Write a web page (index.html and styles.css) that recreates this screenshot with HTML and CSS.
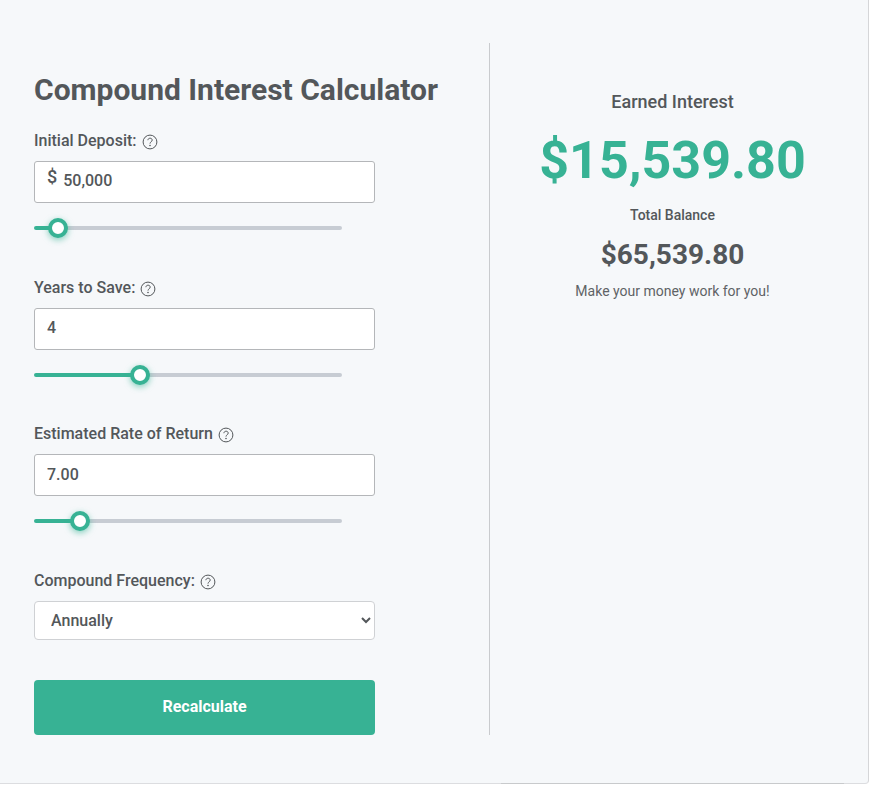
FILE: index.html
```html
<!DOCTYPE html>
<html lang="en">

<head>
    <meta charset="UTF-8">
    <meta name="viewport" content="width=device-width, initial-scale=1.0">
    <title>Compound Interest Calculator</title>
    <link rel="stylesheet" href="styles.css">
</head>

<body>
    <div class="calculator">
        <form class="calc-form">
            <h1>Compound Interest Calculator</h1>

            <div class="field">
                <label class="field-label" for="deposit">Initial Deposit:
                    <svg class="help-icon" viewBox="0 0 16 16"><circle cx="8" cy="8" r="6.9"/><path d="M5.9 6.2c.1-1.3 1-2 2.2-2 1.200 0 2.100.8 2.100 1.900 0 1.700-2.200 1.700-2.200 3.500"/><circle class="dot" cx="8" cy="11.500" r=".8"/></svg>
                </label>
                <div class="input-box">
                    <span class="prefix">$</span>
                    <input id="deposit" type="text" value="50,000">
                </div>
                <input class="slider" type="range" min="0" max="1029000" value="50000" style="--fill: 24px">
            </div>

            <div class="field">
                <label class="field-label" for="years">Years to Save:
                    <svg class="help-icon" viewBox="0 0 16 16"><circle cx="8" cy="8" r="6.9"/><path d="M5.9 6.2c.1-1.3 1-2 2.2-2 1.200 0 2.100.8 2.100 1.900 0 1.700-2.200 1.700-2.200 3.500"/><circle class="dot" cx="8" cy="11.500" r=".8"/></svg>
                </label>
                <div class="input-box">
                    <input id="years" type="text" value="4">
                </div>
                <input class="slider" type="range" min="1" max="10" value="4" style="--fill: 106px">
            </div>

            <div class="field">
                <label class="field-label" for="rate">Estimated Rate of Return
                    <svg class="help-icon" viewBox="0 0 16 16"><circle cx="8" cy="8" r="6.9"/><path d="M5.9 6.2c.1-1.3 1-2 2.2-2 1.200 0 2.100.8 2.100 1.900 0 1.700-2.200 1.700-2.200 3.500"/><circle class="dot" cx="8" cy="11.500" r=".8"/></svg>
                </label>
                <div class="input-box">
                    <input id="rate" type="text" value="7.00">
                </div>
                <input class="slider" type="range" min="0" max="56" value="7" style="--fill: 46px">
            </div>

            <div class="field field-last">
                <label class="field-label" for="frequency">Compound Frequency:
                    <svg class="help-icon" viewBox="0 0 16 16"><circle cx="8" cy="8" r="6.9"/><path d="M5.9 6.2c.1-1.3 1-2 2.2-2 1.200 0 2.100.8 2.100 1.900 0 1.700-2.200 1.700-2.200 3.500"/><circle class="dot" cx="8" cy="11.500" r=".8"/></svg>
                </label>
                <select id="frequency" class="select-box">
                    <option>Annually</option>
                    <option>Monthly</option>
                    <option>Daily</option>
                </select>
            </div>

            <button type="button" class="recalculate">Recalculate</button>
        </form>

        <div class="results">
            <h2>Earned Interest</h2>
            <p class="earned">$15,539.80</p>
            <h3>Total Balance</h3>
            <p class="balance">$65,539.80</p>
            <p class="tagline">Make your money work for you!</p>
        </div>
    </div>
</body>

</html>
```

FILE: styles.css
```css
body {
    margin: 0;
    background-color: white;
    font-family: Roboto, "Liberation Sans", sans-serif;
    color: #53575a;
}

.calculator {
    position: relative;
    box-sizing: border-box;
    width: 869px;
    height: 784px;
    padding: 43px 0 48px 34px;
    display: flex;
    background-color: #f6f8fa;
    border-right: 1px solid #d5d6d8;
    border-bottom: 1px solid #dcdde0;
    border-bottom-right-radius: 4px;
}

/* darker stretch of the bottom edge */
.calculator::after {
    content: "";
    position: absolute;
    left: 501px;
    right: 24px;
    bottom: -1px;
    height: 1px;
    background-color: #c8cacc;
}

.calc-form {
    box-sizing: border-box;
    width: 456px;
    padding-right: 114px;
    border-right: 1px solid #c9cbce;
    flex-shrink: 0;
}

.calc-form h1 {
    margin: 28px 0 0;
    font-size: 30px;
    line-height: 38px;
    font-weight: 700;
    white-space: nowrap;
}

.field {
    height: 146.67px;
}

.calc-form h1 + .field {
    margin-top: 21.4px;
}

.field-last {
    height: 109.6px;
}

.field-label {
    display: flex;
    align-items: center;
    gap: 5px;
    height: 20px;
    margin-bottom: 10.6px;
    font-size: 16px;
    font-weight: 500;
}

.help-icon {
    width: 16px;
    height: 16px;
    margin-top: 3px;
    fill: none;
    stroke: #53575a;
    stroke-width: 1;
}

.help-icon .dot {
    fill: #53575a;
    stroke: none;
}

.input-box {
    box-sizing: border-box;
    display: flex;
    align-items: center;
    width: 341px;
    height: 42px;
    padding: 0 12px 2px;
    background-color: white;
    border: 1px solid #b4b6b9;
    border-radius: 3px;
}

.prefix {
    margin: -8px 6px 0 0;
    font-size: 18px;
    font-weight: 500;
}

.input-box input {
    flex: 1;
    min-width: 0;
    padding: 0;
    border: none;
    outline: none;
    background: transparent;
    font-family: inherit;
    font-size: 16px;
    font-weight: 500;
    color: #53575a;
}

.slider {
    display: block;
    width: 308px;
    height: 20px;
    margin: 15px 0 0;
    -webkit-appearance: none;
    appearance: none;
    background: transparent;
    outline: none;
}

.slider::-webkit-slider-runnable-track {
    height: 4px;
    border-radius: 2px;
    background: linear-gradient(to right, #37b294 var(--fill), #c7ccd3 var(--fill));
}

.slider::-webkit-slider-thumb {
    -webkit-appearance: none;
    box-sizing: border-box;
    width: 20px;
    height: 20px;
    margin-top: -8px;
    background-color: white;
    border: 4px solid #37b294;
    border-radius: 50%;
    box-shadow: 0 2px 6px rgba(55, 178, 148, 0.6);
}

.select-box {
    box-sizing: border-box;
    display: block;
    width: 341px;
    height: 39px;
    padding: 0 12px;
    background-color: white;
    border: 1px solid #cfd1d4;
    border-radius: 4px;
    outline: none;
    font-family: inherit;
    font-size: 16px;
    font-weight: 500;
    color: #53575a;
}

.recalculate {
    display: block;
    width: 341px;
    height: 55px;
    padding: 0 0 2px;
    background-color: #37b294;
    border: none;
    border-radius: 4px;
    font-family: inherit;
    font-size: 16px;
    font-weight: 700;
    color: white;
    cursor: pointer;
}

.results {
    flex: 1;
    padding: 47px 13px 0 0;
    text-align: center;
}

.results h2 {
    margin: 0;
    font-size: 18px;
    line-height: 24px;
    font-weight: 500;
}

.earned {
    margin: 15px 0 0;
    font-size: 52px;
    line-height: 64px;
    font-weight: 700;
    color: #37b294;
}

.results h3 {
    margin: 12px 0 0;
    font-size: 14px;
    line-height: 20px;
    font-weight: 500;
}

.balance {
    margin: 11px 0 0;
    font-size: 28px;
    line-height: 38px;
    font-weight: 700;
}

.tagline {
    margin: 7px 0 0;
    font-size: 14px;
    line-height: 20px;
    color: #5f6366;
}
```
